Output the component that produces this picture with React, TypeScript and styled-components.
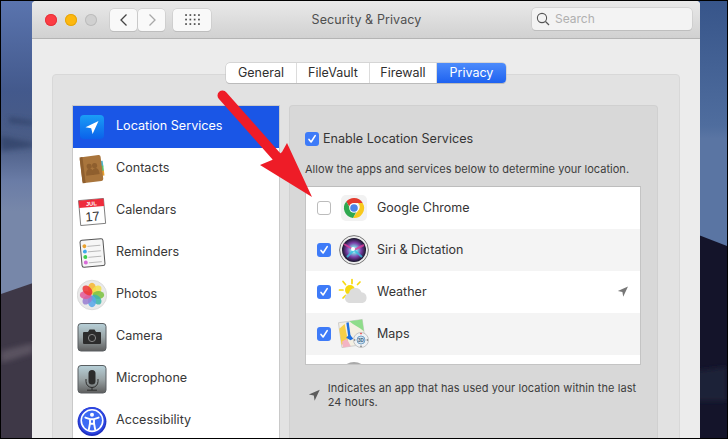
import React from "react";
import styled, { createGlobalStyle } from "styled-components";

const Global = createGlobalStyle`
  html, body { margin: 0; padding: 0; background: #000; overflow: hidden; }
  body { font-family: Inter, "Liberation Sans", sans-serif; color: #333; -webkit-font-smoothing: antialiased; }
`;

const Desktop = styled.div`
  position: relative; width: 726px; height: 437px; margin: 1px 1px 0; overflow: hidden; background: #3f5585;
`;
const Wallpaper = styled.svg`position: absolute; inset: 0; width: 726px; height: 437px;`;
const Window = styled.div`
  position: relative; width: 668px; height: 437px; margin-left: 31px; display: flex; flex-direction: column;
  background: #ececec; border-radius: 4px 4px 0 0; overflow: hidden;
`;
const TitleBar = styled.div`
  position: relative; height: 37px; flex: none; display: flex; align-items: center; padding-left: 13px;
  background: linear-gradient(#e9e9e9, #d1d1d1); border-bottom: 1px solid #b4b4b4;
`;
const Lights = styled.div`display: flex; gap: 8px; margin-right: 13px;`;
const Light = styled.span<{ $c: string; $b: string }>`
  width: 12px; height: 12px; border-radius: 50%; background: ${p => p.$c}; box-shadow: inset 0 0 0 1px ${p => p.$b};
`;
const NavButton = styled.button`
  width: 27px; height: 22px; padding: 0; display: flex; align-items: center; justify-content: center;
  background: #f9f9f9; border: 0; border-radius: 4px; box-shadow: 0 0 0 .5px #c4c4c4, 0 1px 0 #b8b8b8;
  margin-right: 1px;
`;
const GridButton = styled(NavButton)`width: 38px; margin: 0 0 0 7px;`;
const Title = styled.div`
  position: absolute; left: 0; right: 0; text-align: center; font-size: 12.5px; color: #4f4f4f; font-weight: 400; padding-left: 1px; letter-spacing: .1px;
`;
const Search = styled.div`
  position: absolute; left: 500px; top: 7px; width: 160px; height: 22px; box-sizing: border-box;
  background: #f3f3f3; border-radius: 4px; box-shadow: 0 0 0 .5px #c4c4c4, 0 1px 0 #b8b8b8;
  display: flex; align-items: center; padding: 0 0 0 4px; gap: 5px; font-size: 12px; color: #b0b0b0;
`;
const SearchLabel = styled.span`margin-bottom: 2px;`;
const Content = styled.div`flex: 1; padding: 35px 20px 0;`;
const Panel = styled.div`
  height: 380px; background: #e2e2e2; border: 1px solid #d8d8d8; border-radius: 4px 4px 0 0; box-sizing: border-box; width: 628px;
`;
const Tabs = styled.div`
  display: flex; width: fit-content; margin: -12px auto 0; height: 20px; border-radius: 4px; background: #fff;
  box-shadow: 0 0 0 .5px #bdbdbd, 0 1px 0 #b8b8b8; font-size: 12.5px; position: relative;
`;
const Tab = styled.div<{ $on?: boolean; $w: number }>`
  width: ${p => p.$w}px; display: flex; align-items: center; justify-content: center; padding-bottom: 1px; box-sizing: border-box;
  color: ${p => (p.$on ? "#fff" : "#2f2f2f")};
  border-right: ${p => (p.$on ? "0" : "1px solid #dcdcdc")};
  ${p => (p.$on ? "background: linear-gradient(#4c8bfb, #1e62f0); border-radius: 0 4px 4px 0;" : "")}
`;
const Columns = styled.div`display: flex; gap: 9px; padding: 22px 0 0 19px;`;
const Sidebar = styled.div`
  width: 208px; height: 340px; box-sizing: border-box; background: #fff; border: 1px solid #c9c9c9; border-bottom: 0;
`;
const SideRow = styled.div<{ $on?: boolean }>`
  height: 42px; display: flex; align-items: center; padding-left: 4px; gap: 9px; font-size: 12.6px;
  color: ${p => (p.$on ? "#fff" : "#383838")};
  background: ${p => (p.$on ? "#1a56e6" : "transparent")};
`;
const SideLabel = styled.span`margin-bottom: 4px;`;
const IconBox = styled.svg`width: 30px; height: 32px; flex: none;`;
const Detail = styled.div`
  width: 369px; height: 340px; box-sizing: border-box; background: #d8d8d8; border: 1px solid #d0d0d0; border-bottom: 0;
  border-radius: 4px 4px 0 0; padding: 26px 16px 0 15px;
`;
const EnableRow = styled.div`display: flex; align-items: center; gap: 4px; font-size: 12.6px; color: #353535; height: 14px;`;
const RowLabel = styled.span`margin-bottom: 2px;`;
const Hint = styled.div`font-size: 11px; color: #3d3d3d; margin-top: 16px; height: 14px; line-height: 14px; white-space: nowrap; letter-spacing: .02px;`;
const AppList = styled.div`
  margin-top: 10px; width: 336px; height: 179px; box-sizing: border-box; background: #fff;
  border: 1px solid #c4c4c4; border-top-color: #bdbdbd; overflow: hidden;
`;
const AppRow = styled.div<{ $alt?: boolean }>`
  position: relative; height: 42px; display: flex; align-items: center; padding-left: 11px; font-size: 12.5px; color: #353535;
  background: ${p => (p.$alt ? "#f4f4f4" : "#fff")};
`;
const AppIcon = styled.svg`width: 32px; height: 32px; flex: none; margin: 0 7px 0 7px;`;
const Box = styled.span<{ $on?: boolean }>`
  width: 14px; height: 14px; flex: none; box-sizing: border-box; border-radius: 3px; display: flex; align-items: center; justify-content: center;
  background: ${p => (p.$on ? "#3e7bf8" : "#fff")};
  border: ${p => (p.$on ? "0" : "1px solid #bcbcbc")};
`;
const Spacer = styled.span`width: 14px; flex: none;`;
const UsedMark = styled.svg`position: absolute; right: 12px; top: 15px; width: 11px; height: 11px;`;
const Foot = styled.div`display: flex; align-items: center; gap: 8px; margin-top: 16px; padding-left: 3px;`;
const FootText = styled.div`font-size: 11px; line-height: 14px; color: #3d3d3d; width: 320px; letter-spacing: .07px;`;
const Overlay = styled.svg`position: absolute; left: -1px; top: -1px; width: 728px; height: 439px; pointer-events: none;`;

const Check = () => (
  <svg width="10" height="10" viewBox="0 0 10 10"><path d="M2 5.4 4.1 8 8.2 1.6" fill="none" stroke="#fff" strokeWidth="1.6" strokeLinecap="round" strokeLinejoin="round" /></svg>
);
const Locate = ({ c = "#666" }: { c?: string }) => <path d="M11 0.5 0.8 5 5.4 6 6.2 10.8Z" fill={c} />;

const Ic = {
  Location: () => (
    <IconBox viewBox="0 0 30 32">
      <defs><linearGradient id="lg" x1="0" y1="0" x2="0" y2="1"><stop offset="0" stopColor="#1a9df6" /><stop offset="1" stopColor="#0b62ea" /></linearGradient></defs>
      <rect x="3" y="4" width="24" height="24" rx="4" fill="url(#lg)" />
      <path d="M21.5 10 8.5 16.2 14.2 17.2 15.6 23Z" fill="#fff" />
    </IconBox>
  ),
  Contacts: () => (
    <IconBox viewBox="0 0 30 32">
      <g transform="rotate(-7 15 16)">
        <rect x="24" y="9" width="2.6" height="6" fill="#4cb6d0" /><rect x="24" y="14" width="2.6" height="6" fill="#5fc06a" /><rect x="24" y="19" width="2.6" height="5" fill="#e9a12f" />
        <rect x="4" y="3" width="21" height="26" rx="2" fill="#a9753c" />
        <rect x="4" y="3" width="3" height="26" fill="#8f5f2e" />
        <circle cx="12.5" cy="13" r="2.6" fill="#8f5f2e" /><path d="M8.5 22c0-5 2-6.5 4-6.5s4 1.5 4 6.5z" fill="#8f5f2e" />
        <circle cx="18" cy="13" r="2.6" fill="#8f5f2e" /><path d="M15 22c0-5 1-6.5 3-6.5s4 1.5 4 6.5z" fill="#8f5f2e" />
      </g>
    </IconBox>
  ),
  Calendar: () => (
    <IconBox viewBox="0 0 30 32">
      <g transform="rotate(-5 15 16)">
        <rect x="2.5" y="4.5" width="25" height="25" fill="#fff" stroke="#666" strokeWidth=".8" />
        <rect x="2.5" y="4.5" width="25" height="7.5" fill="#ee2c3c" />
        <text x="15" y="10.6" textAnchor="middle" fontSize="5.6" fontWeight="700" fill="#fff" fontFamily="Liberation Sans">JUL</text>
        <text x="15" y="26" textAnchor="middle" fontSize="13" fill="#333" fontFamily="Liberation Sans">17</text>
      </g>
    </IconBox>
  ),
  Reminders: () => (
    <IconBox viewBox="0 0 30 32">
      <g transform="rotate(-5 15 16)">
        <rect x="4" y="2.5" width="23" height="27" rx="2" fill="#f6f6f6" stroke="#555" strokeWidth="1" />
        <g stroke="#aaa" strokeWidth=".8"><path d="M11 9h13M11 14.5h13M11 20h13M11 25.5h13" /></g>
        <circle cx="8" cy="8.5" r="2" fill="#e9a12f" /><circle cx="8" cy="14" r="2" fill="#3fa9ea" /><circle cx="8" cy="19.5" r="2" fill="#3ecf4d" /><circle cx="8" cy="25" r="2" fill="#d86bd8" />
      </g>
    </IconBox>
  ),
  Photos: () => {
    const cols = ["#f7b733", "#f4e04d", "#7cc242", "#3fb6a8", "#5aa7e8", "#9a7fd1", "#e35d9a", "#ee3a3a"];
    return (
      <IconBox viewBox="0 0 30 32">
        <circle cx="15" cy="16" r="14.8" fill="#e9e9e9" stroke="#cfcfcf" strokeWidth=".6" />
        {cols.map((c, i) => (
          <ellipse key={c} cx="15" cy="9.6" rx="4" ry="5.8" fill={c} opacity=".88" transform={`rotate(${i * 45} 15 16)`} />
        ))}
      </IconBox>
    );
  },
  Camera: () => (
    <IconBox viewBox="0 0 30 32">
      <defs><linearGradient id="cg" x1="0" y1="0" x2="0" y2="1"><stop offset="0" stopColor="#b7d0d8" /><stop offset=".5" stopColor="#9aa4a6" /><stop offset="1" stopColor="#5e5e5e" /></linearGradient></defs>
      <rect x="1" y="2.5" width="28" height="27.5" rx="3" fill="url(#cg)" stroke="#5a5f62" strokeWidth="1" />
      <path d="M7 11h4l1.5-2.5h5L19 11h4a1 1 0 0 1 1 1v10a1 1 0 0 1-1 1H7a1 1 0 0 1-1-1V12a1 1 0 0 1 1-1z" fill="#2c2c2c" />
      <circle cx="15" cy="17" r="3.6" fill="none" stroke="#888" strokeWidth="1" />
    </IconBox>
  ),
  Mic: () => (
    <IconBox viewBox="0 0 30 32">
      <rect x="1" y="2.5" width="28" height="27.5" rx="3" fill="url(#cg)" stroke="#5a5f62" strokeWidth="1" />
      <rect x="11.5" y="7" width="7" height="14.5" rx="3.5" fill="#2c2c2c" />
      <path d="M9 16v2.5a6 6 0 0 0 12 0V16M15 24.5V27M10 27.2h10" fill="none" stroke="#2c2c2c" strokeWidth="1" />
    </IconBox>
  ),
  Access: () => (
    <IconBox viewBox="0 0 30 32">
      <circle cx="15" cy="16.6" r="14.4" fill="#1f2fc0" />
      <circle cx="15" cy="15.6" r="13.6" fill="#2c45e0" />
      <circle cx="15" cy="15.6" r="10.8" fill="#3e6bf4" stroke="#fff" strokeWidth="1.6" />
      <circle cx="15" cy="9.8" r="2" fill="#fff" />
      <path d="M8.4 12.6 13 14.2V18.3L11.8 24.6M21.6 12.6 17 14.2V18.3L18.2 24.6M13 14.2h4M13.4 18.8h3.2" fill="none" stroke="#fff" strokeWidth="1.9" strokeLinecap="round" />
    </IconBox>
  ),
  Chrome: () => (
    <AppIcon viewBox="0 0 32 32">
      <rect x="3" y="3" width="26" height="26" rx="5" fill="#f2f2f2" />
      <path d="M16 6a10 10 0 0 1 8.7 5H16a5 5 0 0 0-4.8 3.5L8.3 9.6A10 10 0 0 1 16 6Z" fill="#e33b2e" />
      <path d="M24.7 11A10 10 0 0 1 15 26l4.3-6.8A5 5 0 0 0 20 11Z" fill="#f8c91c" />
      <path d="M15 26A10 10 0 0 1 8.3 9.6l4.4 7.6a5 5 0 0 0 6 2.1Z" fill="#2fa84f" />
      <circle cx="16" cy="16" r="4.8" fill="#fff" /><circle cx="16" cy="16" r="3.8" fill="#4a84e8" />
    </AppIcon>
  ),
  Siri: () => (
    <AppIcon viewBox="0 0 32 32">
      <defs><radialGradient id="sg"><stop offset="0" stopColor="#fff" /><stop offset=".25" stopColor="#7fd8e8" /><stop offset=".6" stopColor="#7b3fa8" /><stop offset="1" stopColor="#141428" /></radialGradient></defs>
      <circle cx="16" cy="16" r="14.4" fill="#eee" stroke="#777" strokeWidth="1" />
      <circle cx="16" cy="16" r="12" fill="url(#sg)" />
      <path d="M16 16 6 10M16 16 26 11" stroke="#e03f9c" strokeWidth="2" opacity=".8" />
      <path d="M16 16 9 23M16 16 24 23" stroke="#35c0e0" strokeWidth="2" opacity=".8" />
      <circle cx="15" cy="15" r="2" fill="#fff" />
    </AppIcon>
  ),
  Weather: () => (
    <AppIcon viewBox="0 0 32 32">
      <g stroke="#f7d90e" strokeWidth="1.7" strokeLinecap="round">
        <path d="M14 3.5v4M5 5.5l2.5 3M22 6l-2.5 2.5M1.5 14h3.5M5 22l2.5-2.5" />
      </g>
      <circle cx="12" cy="14" r="5" fill="#f7d90e" />
      <path d="M11 27a5 5 0 0 1 0-9.8 6.5 6.5 0 0 1 12.5-1 5.5 5.5 0 0 1 1 10.8z" fill="#dcdcdc" />
    </AppIcon>
  ),
  Maps: () => (
    <AppIcon viewBox="0 0 32 32">
      <g transform="rotate(-8 14 15)">
        <rect x="2" y="3" width="24" height="25" fill="#f4efe2" stroke="#c9c9c9" strokeWidth=".8" />
        <path d="M13 3h13v12c-4-5-9-7-13-12z" fill="#8fdc8a" />
        <path d="M2 9l6-4 1 20H2z" fill="#f7cf47" />
        <path d="M3 22l5-2 3 8H3z" fill="#f3b4c4" />
        <path d="M11 4v16" stroke="#1f6fe0" strokeWidth="2.4" />
        <path d="M7.5 19l4-3 3 5-3 1z" fill="#1f6fe0" />
      </g>
      <circle cx="23" cy="22" r="7.5" fill="#eef1f4" stroke="#b9b9b9" strokeWidth=".8" />
      <circle cx="23" cy="22" r="4" fill="#cfe1ef" stroke="#5c8eb8" strokeWidth=".8" />
      <text x="23" y="24" textAnchor="middle" fontSize="4.6" fontWeight="700" fill="#44617c" fontFamily="Liberation Sans">3D</text>
      <circle cx="23" cy="15.6" r=".8" fill="#e33" /><circle cx="23" cy="28.3" r=".7" fill="#555" /><circle cx="16.7" cy="22" r=".7" fill="#555" /><circle cx="29.3" cy="22" r=".7" fill="#555" />
    </AppIcon>
  ),
  Partial: () => (
    <AppIcon viewBox="0 0 32 32"><circle cx="16" cy="16" r="14" fill="#a9a9a9" /></AppIcon>
  ),
};

const sideItems: [React.FC, string][] = [
  [Ic.Contacts, "Contacts"], [Ic.Calendar, "Calendars"], [Ic.Reminders, "Reminders"], [Ic.Photos, "Photos"],
  [Ic.Camera, "Camera"], [Ic.Mic, "Microphone"], [Ic.Access, "Accessibility"],
];

export default function App() {
  return (
    <>
      <Global />
      <Desktop>
        <Wallpaper viewBox="0 0 726 437" preserveAspectRatio="none">
          <defs>
            <linearGradient id="sl" x1="0" y1="0" x2="0" y2="1"><stop offset="0" stopColor="#5a74ae" /><stop offset=".3" stopColor="#43598c" /><stop offset=".47" stopColor="#4a5c85" /><stop offset=".6" stopColor="#6a7ca6" /><stop offset=".7" stopColor="#7787a9" /></linearGradient>
            <linearGradient id="sr" x1="0" y1="0" x2="0" y2="1"><stop offset="0" stopColor="#37558a" /><stop offset=".5" stopColor="#4f6d9e" /><stop offset=".55" stopColor="#5a75a3" /></linearGradient>
            <filter id="b1"><feGaussianBlur stdDeviation="2.5" /></filter>
          </defs>
          <rect x="0" y="0" width="32" height="300" fill="url(#sl)" />
          <rect x="695" y="0" width="31" height="250" fill="url(#sr)" />
          <path d="M0 135 32 142V146L0 150ZM8 116 32 120V124L8 122Z" fill="#2f3f66" opacity=".7" filter="url(#b1)" />
          <path d="M0 293 32 282V437H0Z" fill="#3e3847" />
          <path d="M0 350 32 342V352L0 362Z" fill="#5a5260" filter="url(#b1)" />
          <path d="M695 233 726 245V437H695Z" fill="#14142a" />
          <path d="M695 370 726 366V400H695Z" fill="#1e2138" filter="url(#b1)" />
        </Wallpaper>
        <Window>
          <TitleBar>
            <Lights>
              <Light $c="#fc3c44" $b="#e5343c" />
              <Light $c="#fdb80f" $b="#e5a50d" />
              <Light $c="#d0d0d0" $b="#bcbcbc" />
            </Lights>
            <NavButton aria-label="Back">
              <svg width="10" height="14" viewBox="0 0 10 14"><path d="M7.5 1.5 2 7l5.5 5.5" fill="none" stroke="#444" strokeWidth="1.3" /></svg>
            </NavButton>
            <NavButton aria-label="Forward">
              <svg width="10" height="14" viewBox="0 0 10 14"><path d="M2.5 1.5 8 7l-5.5 5.5" fill="none" stroke="#a8a8a8" strokeWidth="1.3" /></svg>
            </NavButton>
            <GridButton aria-label="Show all">
              <svg width="15" height="11" viewBox="0 0 15 11" fill="#4a4a4a">
                {[1, 5.5, 10].map(y => [1, 5.3, 9.6, 13.9].map(x => <rect key={`${x}-${y}`} x={x - 0.8} y={y - 0.8} width="1.7" height="1.7" />))}
              </svg>
            </GridButton>
            <Title>Security &amp; Privacy</Title>
            <Search>
              <svg width="14" height="14" viewBox="0 0 14 14"><circle cx="6" cy="6" r="4.6" fill="none" stroke="#555" strokeWidth="1.1" /><path d="m9.5 9.5 3.5 3.5" stroke="#555" strokeWidth="1.2" /></svg>
              <SearchLabel>Search</SearchLabel>
            </Search>
          </TitleBar>
          <Content>
            <Panel>
              <Tabs>
                <Tab $w={71}>General</Tab>
                <Tab $w={73}>FileVault</Tab>
                <Tab $w={67}>Firewall</Tab>
                <Tab $w={69} $on>Privacy</Tab>
              </Tabs>
              <Columns>
                <Sidebar>
                  <SideRow $on><Ic.Location /><SideLabel>Location Services</SideLabel></SideRow>
                  {sideItems.map(([I, t]) => <SideRow key={t}><I /><SideLabel>{t}</SideLabel></SideRow>)}
                </Sidebar>
                <Detail>
                  <EnableRow><Box $on><Check /></Box><RowLabel>Enable Location Services</RowLabel></EnableRow>
                  <Hint>Allow the apps and services below to determine your location.</Hint>
                  <AppList>
                    <AppRow><Box /><Ic.Chrome /><RowLabel>Google Chrome</RowLabel></AppRow>
                    <AppRow $alt><Box $on><Check /></Box><Ic.Siri /><RowLabel>Siri &amp; Dictation</RowLabel></AppRow>
                    <AppRow><Box $on><Check /></Box><Ic.Weather /><RowLabel>Weather</RowLabel><UsedMark viewBox="0 0 11 11"><Locate c="#777" /></UsedMark></AppRow>
                    <AppRow $alt><Box $on><Check /></Box><Ic.Maps /><RowLabel>Maps</RowLabel></AppRow>
                    <AppRow><Spacer /><Ic.Partial /></AppRow>
                  </AppList>
                  <Foot>
                    <svg width="12" height="12" viewBox="0 0 11 11"><Locate c="#5c5c5c" /></svg>
                    <FootText>Indicates an app that has used your location within the last 24 hours.</FootText>
                  </Foot>
                </Detail>
              </Columns>
            </Panel>
          </Content>
        </Window>
        <Overlay viewBox="0 0 728 439">
          <path d="M222.5 95.5 277 157" stroke="#ee1c27" strokeWidth="10" strokeLinecap="round" fill="none" />
          <path d="M287 143 312 197 260 165 272 160 282 152Z" fill="#ee1c27" />
        </Overlay>
      </Desktop>
    </>
  );
}
